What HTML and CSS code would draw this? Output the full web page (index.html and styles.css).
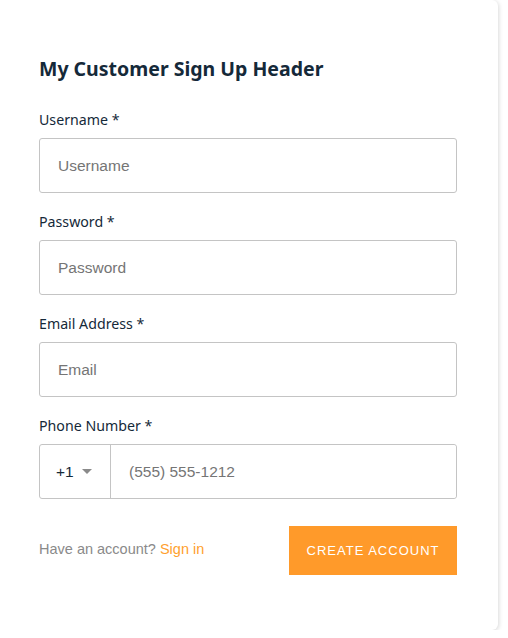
FILE: index.html
```html
<!DOCTYPE html>
<html lang="en">
<head>
<meta charset="utf-8">
<title>Sign Up</title>
<link rel="stylesheet" href="styles.css">
</head>
<body>
<div class="card">
  <h1 class="header">My Customer Sign Up Header</h1>
  <div class="field">
    <label class="label">Username *</label>
    <input class="input" type="text" placeholder="Username">
  </div>
  <div class="field">
    <label class="label">Password *</label>
    <input class="input" type="password" placeholder="Password">
  </div>
  <div class="field">
    <label class="label">Email Address *</label>
    <input class="input" type="email" placeholder="Email">
  </div>
  <div class="field field-last">
    <label class="label">Phone Number *</label>
    <div class="phone">
      <div class="dial">
        <span class="dial-code">+1</span>
        <svg class="caret" width="10" height="5" viewBox="0 0 10 5"><path d="M0 0H10L5 5Z" fill="#8a8a8a"/></svg>
      </div>
      <input class="phone-input" type="tel" placeholder="(555) 555-1212">
    </div>
  </div>
  <div class="footer">
    <span class="signin-text">Have an account? <a class="signin-link" href="#">Sign in</a></span>
    <button class="btn" type="button">CREATE ACCOUNT</button>
  </div>
</div>
</body>
</html>
```
FILE: styles.css
```css
* { box-sizing: border-box; }
html, body { margin: 0; padding: 0; background: #fff; }
body { font-family: "Liberation Sans", Arial, sans-serif; }

.card {
  margin-left: -10px;
  width: 508px;
  padding: 57px 41px 55px 49px;
  background: #fff;
  border-radius: 6px;
  box-shadow: 1px 1px 4px 0 rgba(0, 0, 0, 0.15);
}

.header {
  margin: 0 0 32px;
  font-family: "Noto Sans", sans-serif;
  font-size: 19.5px;
  line-height: 24px;
  font-weight: 700;
  color: #152939;
}

.field { margin-bottom: 22px; }
.field-last { margin-bottom: 27px; }

.label {
  display: block;
  margin-bottom: 12px;
  font-family: "Noto Sans", sans-serif;
  font-size: 14.2px;
  line-height: 13px;
  color: #152939;
}

.input, .phone-input {
  display: block;
  width: 100%;
  height: 55px;
  padding: 0 18px;
  border: 1px solid #c4c4c4;
  border-radius: 3px;
  background: #fff;
  font-family: "Liberation Sans", Arial, sans-serif;
  font-size: 15.5px;
  color: #152939;
  outline: none;
}
.input::placeholder, .phone-input::placeholder { color: #757575; }

.phone {
  display: flex;
  height: 55px;
  border: 1px solid #c4c4c4;
  border-radius: 3px;
}
.dial {
  display: flex;
  align-items: center;
  width: 71px;
  padding-left: 16px;
  border-right: 1px solid #c4c4c4;
}
.dial-code {
  font-family: "Liberation Sans", Arial, sans-serif;
  font-size: 15.5px;
  color: #152939;
}
.caret { margin-left: 8px; }
.phone-input {
  flex: 1;
  height: 53px;
  border: none;
  border-radius: 0 3px 3px 0;
  padding-left: 18px;
}

.footer {
  display: flex;
  justify-content: space-between;
  align-items: center;
}
.signin-text {
  margin-bottom: 4px;
  font-size: 14.5px;
  color: #8a8a8a;
}
.signin-link { color: #ff9f2e; text-decoration: none; }
.btn {
  height: 49px;
  width: 168px;
  padding: 0;
  border: none;
  background: #ff9a2a;
  color: #fff;
  font-family: "Liberation Sans", Arial, sans-serif;
  font-size: 13px;
  letter-spacing: 1px;
}
```
